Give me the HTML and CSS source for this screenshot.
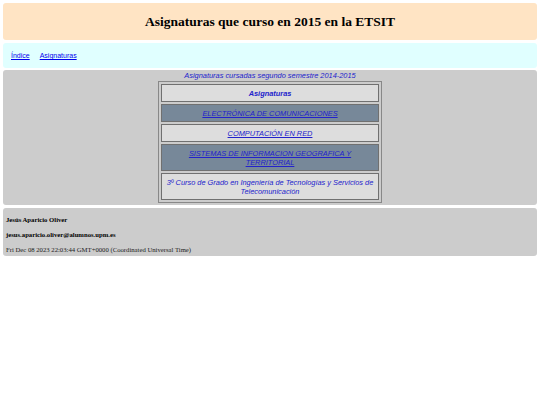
FILE: index.html
```html
<!DOCTYPE html>
<html lang="es">
<head>
<meta charset="utf-8">
<title>Asignaturas</title>
<link rel="stylesheet" href="styles.css">
</head>
<body>
<header class="cabecera">
  <h1 class="titulo">Asignaturas que curso en 2015 en la ETSIT</h1>
</header>
<nav class="menu">
  <a href="#">Índice</a>
  <a href="#">Asignaturas</a>
</nav>
<main class="principal">
  <table class="tabla">
    <caption class="leyenda">Asignaturas cursadas segundo semestre 2014-2015</caption>
    <tr><th class="celda cabeza">Asignaturas</th></tr>
    <tr><td class="celda oscura"><a href="#">ELECTRÓNICA DE COMUNICACIONES</a></td></tr>
    <tr><td class="celda clara"><a href="#">COMPUTACIÓN EN RED</a></td></tr>
    <tr><td class="celda oscura"><a href="#">SISTEMAS DE INFORMACION GEOGRAFICA Y TERRITORIAL</a></td></tr>
    <tr><td class="celda clara texto">3º Curso de Grado en Ingeniería de Tecnologías y Servicios de Telecomunicación</td></tr>
  </table>
</main>
<footer class="pie">
  <p class="autor">Jesús Aparicio Oliver</p>
  <p class="autor">jesus.aparicio.oliver@alumnos.upm.es</p>
  <p class="fecha">Fri Dec 08 2023 22:03:44 GMT+0000 (Coordinated Universal Time)</p>
</footer>
</body>
</html>
```
FILE: styles.css
```css
body {
  margin: 3px;
  font-family: "Liberation Serif", serif;
  background: #fff;
}
.cabecera {
  background: #ffe4c4;
  border-radius: 3px;
  height: 37px;
  display: flex;
  align-items: center;
  justify-content: center;
}
.titulo {
  margin: 0;
  font-size: 13.5px;
  font-weight: bold;
}
.menu {
  margin-top: 3px;
  background: #e0ffff;
  border-radius: 3px;
  height: 25px;
  display: flex;
  align-items: center;
  gap: 10px;
  padding-left: 8px;
  font-family: "Liberation Sans", sans-serif;
  font-size: 7px;
}
.menu a { color: #00e; }
.principal {
  margin-top: 2px;
  background: #ccc;
  border-radius: 3px;
  padding: 1px 0 2px;
  display: flex;
  justify-content: center;
}
.tabla {
  border: 1px solid #888;
  border-spacing: 2px;
  width: 224px;
  font-family: "Liberation Sans", sans-serif;
  font-style: italic;
  font-size: 7.4px;
}
.leyenda {
  color: #22c;
  line-height: 10px;
}
.celda {
  border: 1px solid #707070;
  text-align: center;
  padding: 3.5px 4px;
  line-height: 9px;
}
.cabeza { color: #22c; font-weight: bold; background: #ddd; }
.oscura { background: #778899; }
.clara { background: #ddd; }
.celda a { color: #22c; }
.texto { color: #22c; }
.pie {
  margin-top: 3px;
  background: #ccc;
  border-radius: 3px;
  padding: 1px 3px 0;
  font-size: 6.7px;
  line-height: 8px;
  overflow: hidden;
}
.pie p { margin: 7px 0; }
.pie p.fecha { margin-bottom: 2px; color: #222; }
.autor { font-weight: bold; }
```
